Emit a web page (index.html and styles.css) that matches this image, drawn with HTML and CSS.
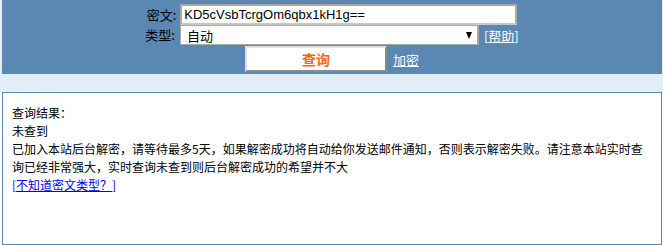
FILE: index.html
```html
<!DOCTYPE html>
<html lang="zh-CN">
<head>
    <meta charset="UTF-8">
    <title>密文查询</title>
    <link rel="stylesheet" href="styles.css">
</head>
<body>

    <div class="top">
        <form class="search" onsubmit="return false">
            <div class="row">
                <label for="cipher">密文:</label>
                <input type="text" id="cipher" class="cipher" value="KD5cVsbTcrgOm6qbx1kH1g==">
            </div>
            <div class="row">
                <label for="type">类型:</label>
                <div class="select-wrap">
                    <select id="type">
                        <option>自动</option>
                    </select>
                </div>
                <span class="help">[<a href="#">帮助</a>]</span>
            </div>
            <div class="row">
                <button type="submit" class="go">查询</button>
                <a href="#" class="encrypt">加密</a>
            </div>
        </form>
    </div>

    <!-- result panel -->
    <div class="result">
        查询结果：<br>
        未查到<br>
        已加入本站后台解密，请等待最多5天，如果解密成功将自动给你发送邮件通知，否则表示解密失败。请注意本站实时查询已经非常强大，实时查询未查到则后台解密成功的希望并不大<br>
        <span class="unknown">[<a href="#">不知道密文类型？</a>]</span>
    </div>

</body>
</html>
```

FILE: styles.css
```css
body {
    margin: 0;
    padding: 0;
    background-color: #fff;
    font-family: "Noto Sans CJK SC", "Liberation Sans", sans-serif;
    font-size: 12px;
    color: #000;
}

.top {
    background-color: #e1edf7;
    padding-bottom: 18px;
}

.search {
    margin: 0 1px 0 2px;
    padding: 4px 0 2px;
    background-color: #5b87b3;
}

.row {
    display: flex;
    justify-content: center;
    align-items: center;
}

.row label {
    margin-right: 4px;
    font-size: 13px;
    line-height: 20px;
}

.cipher {
    box-sizing: border-box;
    width: 337px;
    height: 21px;
    margin: 0;
    padding: 0 2px;
    border: 2px solid #a9a9a9;
    border-bottom-color: #c8c8c8;
    font-family: "Liberation Sans", Arial, sans-serif;
    font-size: 13px;
    color: #000;
    outline: none;
}

.select-wrap {
    position: relative;
    margin-left: 1px;
}

.select-wrap select {
    appearance: none;
    -webkit-appearance: none;
    box-sizing: border-box;
    width: 299px;
    height: 20px;
    margin: 0;
    padding: 0 6px;
    border: 1px solid #a9a9a9;
    border-right-width: 2px;
    border-radius: 0;
    background-color: #fff;
    font-family: "Noto Sans CJK SC", sans-serif;
    font-size: 13px;
    color: #000;
}

.select-wrap::after {
    content: "";
    position: absolute;
    right: 7px;
    top: 7px;
    border-left: 3.5px solid transparent;
    border-right: 3.5px solid transparent;
    border-top: 7px solid #000;
    pointer-events: none;
}

.help {
    margin-left: 5px;
    color: #fff;
    font-size: 13px;
}

.help a,
.encrypt {
    color: #fff;
    text-decoration: underline;
}

.row:last-child {
    margin-top: 1px;
}

.go {
    box-sizing: border-box;
    width: 142px;
    height: 26px;
    margin: 0 6px 0 0;
    padding: 0;
    background-color: #fff;
    border: 2px solid;
    border-color: #e0e0e0 #8a8a8a #8a8a8a #e0e0e0;
    color: #ff6600;
    font-family: "Noto Sans CJK SC", sans-serif;
    font-size: 14px;
    font-weight: bold;
}

.encrypt {
    font-size: 13px;
}

.result {
    box-sizing: border-box;
    height: 153px;
    margin: 0 1px 0 2px;
    padding: 11px 9px;
    border: 1px solid #5b87b3;
    line-height: 18px;
}

.unknown,
.unknown a {
    color: #0000ee;
}
```
